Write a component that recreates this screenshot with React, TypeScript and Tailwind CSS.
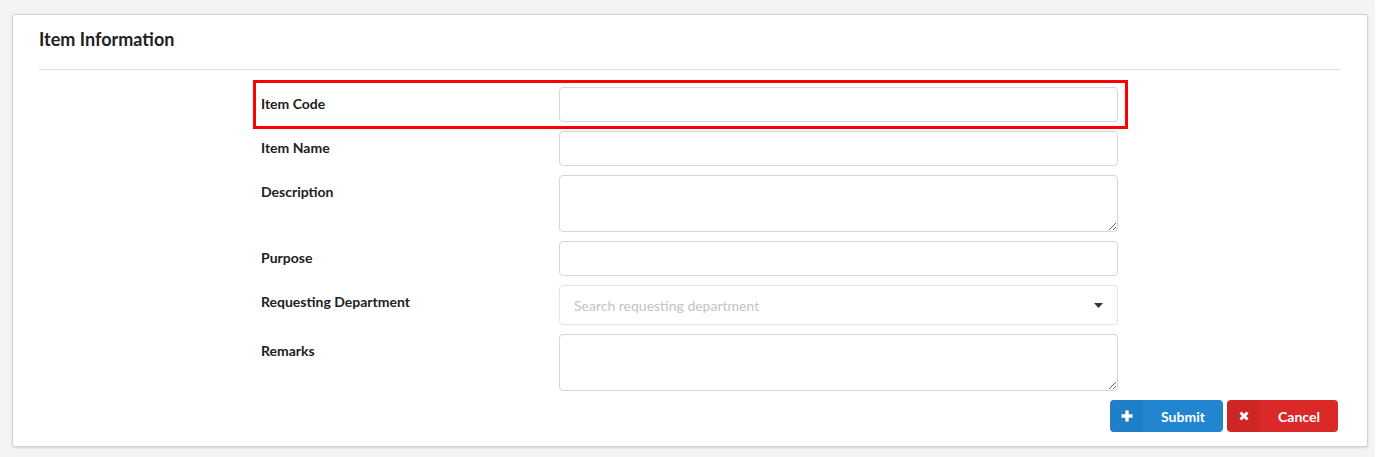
import React from "react";

const labelClass = "pt-[7px] text-[14px] leading-[20px] font-bold text-[#212121]";
const inputClass =
    "block h-[35px] w-full rounded-[4px] border border-[#d3d6da] bg-white px-[14px] text-[14px] outline-none";
const areaClass =
    "block h-[57px] w-full rounded-[4px] border border-[#d3d6da] bg-white px-[14px] py-[8px] text-[14px] outline-none";

function Row({ label, children }: { label: string; children: React.ReactNode }) {
    return (
        <div className="grid grid-cols-[298px_1fr]">
            <div className={labelClass}>{label}</div>
            <div>{children}</div>
        </div>
    );
}

function PlusIcon() {
    return (
        <svg width="12" height="12" viewBox="0 0 12 12" fill="none">
            <path d="M6 0.5v11M0.5 6h11" stroke="white" strokeWidth="3.4" />
        </svg>
    );
}

function TimesIcon() {
    return (
        <svg width="10" height="10" viewBox="0 0 10 10" fill="none">
            <path d="M1.5 1.5l7 7M8.5 1.5l-7 7" stroke="white" strokeWidth="3" />
        </svg>
    );
}

export default function App() {
    return (
        <div className="flex w-full bg-white font-['Lato',_'Noto_Sans',_sans-serif]">
            <div className="h-[457px] w-[1375px] bg-[#f4f4f4] pl-[12px] pt-[14px]">
                <div className="w-[1356px] rounded-[2px] border border-[#d4d4d5] bg-white px-[26px] shadow-[0_1px_2px_0_rgba(34,36,38,0.15)]">
                    <div className="border-b border-[#dedede] pb-[18px] pt-[13px]">
                        <h2 className="text-[18px] leading-[23px] font-bold text-[#212121]">
                            Item Information
                        </h2>
                    </div>

                    <div className="ml-[222px] mt-[17px] flex w-[857px] flex-col gap-[9px]">
                        <div className="relative">
                            <span className="pointer-events-none absolute -bottom-[7px] -left-[8px] -right-[10px] -top-[7px] border-[3px] border-[#ff0000]" />
                            <Row label="Item Code">
                                <input className={inputClass} />
                            </Row>
                        </div>
                        <Row label="Item Name">
                            <input className={inputClass} />
                        </Row>
                        <Row label="Description">
                            <textarea className={areaClass} />
                        </Row>
                        <Row label="Purpose">
                            <input className={inputClass} />
                        </Row>
                        <Row label="Requesting Department">
                            <div className="flex h-[40px] w-full items-center justify-between rounded-[4px] border border-[#e4e4e4] bg-white pl-[14px] pr-[14px]">
                                <span className="text-[14px] text-[#c4c4c4]">Search requesting department</span>
                                <svg width="9" height="5" viewBox="0 0 9 5">
                                    <path d="M0 0h9L4.5 5z" fill="#333" />
                                </svg>
                            </div>
                        </Row>
                        <Row label="Remarks">
                            <textarea className={areaClass} />
                        </Row>
                    </div>

                    <div className="mt-[9px] flex justify-end gap-[4px] pb-[14px] pr-[3px]">
                        <button className="flex h-[32px] w-[113px] overflow-hidden rounded-[4px] bg-[#2185d0] text-[14px] font-bold text-white">
                            <span className="flex h-full w-[33px] items-center justify-center bg-black/5">
                                <PlusIcon />
                            </span>
                            <span className="flex flex-1 items-center justify-center">Submit</span>
                        </button>
                        <button className="flex h-[32px] w-[111px] overflow-hidden rounded-[4px] bg-[#db2828] text-[14px] font-bold text-white">
                            <span className="flex h-full w-[33px] items-center justify-center bg-black/5">
                                <TimesIcon />
                            </span>
                            <span className="flex flex-1 items-center justify-center">Cancel</span>
                        </button>
                    </div>
                </div>
            </div>
        </div>
    );
}
